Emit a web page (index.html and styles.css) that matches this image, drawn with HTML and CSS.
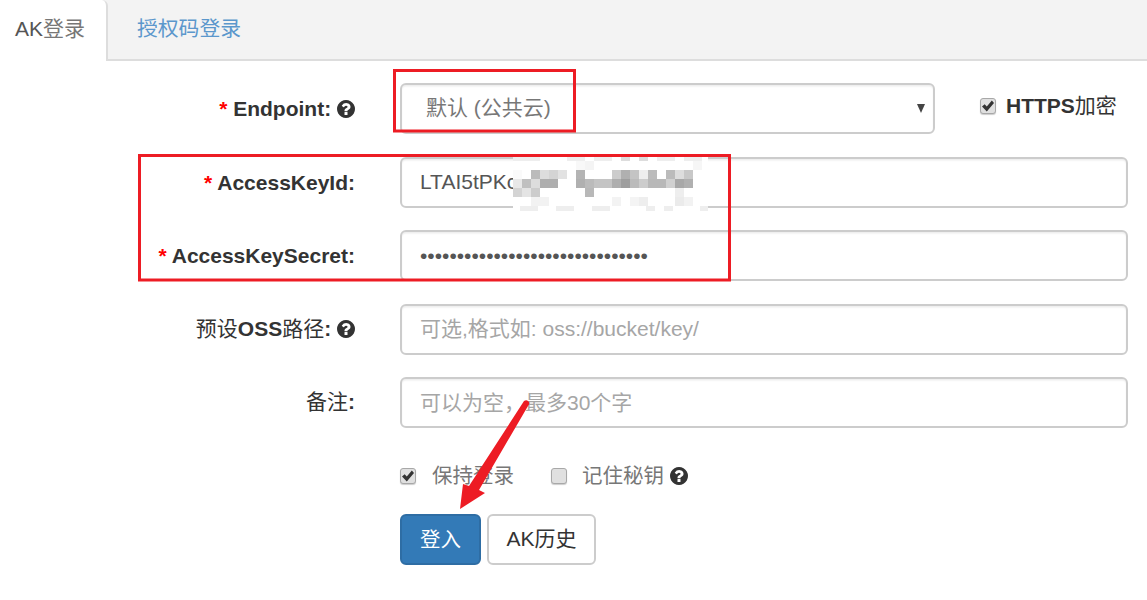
FILE: index.html
```html
<!DOCTYPE html>
<html lang="zh-CN">
<head>
<meta charset="utf-8">
<title>AK登录</title>
<link rel="stylesheet" href="styles.css">
</head>
<body>
<svg width="0" height="0" class="defs">
  <symbol id="q" viewBox="128 128 1536 1536"><path d="M1024 1376v-192q0-14-9-23t-23-9h-192q-14 0-23 9t-9 23v192q0 14 9 23t23 9h192q14 0 23-9t9-23zm256-672q0-88-55.5-163t-138.5-116-170-41q-243 0-371 213-15 24 8 42l132 100q7 6 19 6 16 0 25-12 53-68 86-92 34-24 86-24 48 0 85.5 26t37.5 59q0 38-20 61t-68 45q-63 28-115.5 86.5t-52.5 125.5v36q0 14 9 23t23 9h192q14 0 23-9t9-23q0-19 21.5-49.5t54.5-49.5q32-18 49-28.5t46-35 44.5-48 28-60.5 12.5-81zm384 192q0 209-103 385.5t-279.5 279.5-385.5 103-385.5-103-279.5-279.5-103-385.5 103-385.5 279.5-279.5 385.5-103 385.5 103 279.5 279.5 103 385.5z"/></symbol>
</svg>
<nav class="tabs">
  <a class="tab tab-active">AK<span class="thin">登录</span></a>
  <a class="tab tab-link">授权码登录</a>
</nav>
<form class="form">
  <div class="row">
    <label class="label label-latin"><span class="req">*</span> Endpoint: <svg class="help"><use href="#q"/></svg></label>
    <div class="select-wrap">
      <select class="control select"><option>默认 (公共云)</option></select>
      <span class="caret"></span>
    </div>
    <label class="check https"><input type="checkbox" checked><span>HTTPS<span class="cjk">加密</span></span></label>
  </div>
  <div class="row">
    <label class="label label-latin"><span class="req">*</span> AccessKeyId:</label>
    <input class="control" type="text" value="LTAI5tPKcxxxxxxxxxxxx">
  </div>
  <div class="row">
    <label class="label label-latin"><span class="req">*</span> AccessKeySecret:</label>
    <input class="control" type="password" value="1234567890123456789012345678901">
  </div>
  <div class="row">
    <label class="label"><span class="cjk">预设</span>OSS<span class="cjk">路径</span>: <svg class="help"><use href="#q"/></svg></label>
    <input class="control" type="text" placeholder="可选,格式如: oss://bucket/key/">
  </div>
  <div class="row">
    <label class="label"><span class="cjk">备注</span>:</label>
    <input class="control" type="text" placeholder="可以为空，最多30个字">
  </div>
  <div class="row row-checks">
    <label class="check"><input type="checkbox" checked><span>保持登录</span></label>
    <label class="check check-two"><input type="checkbox"><span>记住秘钥</span><svg class="help"><use href="#q"/></svg></label>
  </div>
  <div class="row row-buttons">
    <button type="button" class="btn btn-primary">登入</button>
    <button type="button" class="btn">AK历史</button>
  </div>
</form>
<svg class="overlay" width="1147" height="600" viewBox="0 0 1147 600">
  <g class="mosaic">
    <rect x="513" y="157" width="195" height="54" fill="#fff"/>
    <g fill="#eee">
      <rect x="513" y="157" width="27" height="4"/><rect x="567" y="157" width="18" height="4"/><rect x="594" y="157" width="18" height="4"/><rect x="621" y="157" width="9" height="4" fill="#ddd"/><rect x="639" y="157" width="9" height="4" fill="#ddd"/><rect x="657" y="157" width="18" height="4"/><rect x="684" y="157" width="18" height="4"/>
      <rect x="576" y="161" width="9" height="9" fill="#f8f8f8"/><rect x="585" y="161" width="9" height="9" fill="#f4f4f4"/><rect x="693" y="161" width="9" height="9" fill="#f6f6f6"/>
    </g>
    <rect x="513" y="170" width="9" height="9" fill="#fafafa"/><rect x="531" y="170" width="9" height="9" fill="#bbb"/><rect x="540" y="170" width="9" height="9" fill="#ddd"/><rect x="549" y="170" width="9" height="9" fill="#d4d4d4"/><rect x="558" y="170" width="9" height="9" fill="#e2e2e2"/><rect x="576" y="170" width="9" height="9" fill="#b4b4b4"/><rect x="612" y="170" width="9" height="9" fill="#ccc"/><rect x="621" y="170" width="9" height="9" fill="#b0b0b0"/><rect x="630" y="170" width="9" height="9" fill="#c4c4c4"/><rect x="639" y="170" width="9" height="9" fill="#eee"/><rect x="648" y="170" width="9" height="9" fill="#bbb"/><rect x="666" y="170" width="9" height="9" fill="#bbb"/><rect x="675" y="170" width="9" height="9" fill="#ddd"/><rect x="684" y="170" width="9" height="9" fill="#c8c8c8"/>
    <rect x="513" y="179" width="9" height="9" fill="#e8e8e8"/><rect x="522" y="179" width="9" height="9" fill="#c0c0c0"/><rect x="531" y="179" width="9" height="9" fill="#ddd"/><rect x="540" y="179" width="18" height="9" fill="#aeaeae"/><rect x="576" y="179" width="9" height="9" fill="#b0b0b0"/><rect x="585" y="179" width="9" height="9" fill="#bbb"/><rect x="594" y="179" width="18" height="9" fill="#c4c4c4"/><rect x="612" y="179" width="9" height="9" fill="#aeaeae"/><rect x="621" y="179" width="9" height="9" fill="#9e9e9e"/><rect x="630" y="179" width="9" height="9" fill="#bbb"/><rect x="639" y="179" width="9" height="9" fill="#ccc"/><rect x="648" y="179" width="18" height="9" fill="#b8b8b8"/><rect x="666" y="179" width="9" height="9" fill="#d0d0d0"/><rect x="675" y="179" width="9" height="9" fill="#a8a8a8"/><rect x="684" y="179" width="9" height="9" fill="#b0b0b0"/>
    <rect x="513" y="188" width="9" height="9" fill="#d4d4d4"/><rect x="522" y="188" width="9" height="9" fill="#e4e4e4"/><rect x="531" y="188" width="9" height="9" fill="#ccc"/><rect x="585" y="188" width="9" height="9" fill="#b8b8b8"/><rect x="675" y="188" width="9" height="9" fill="#eee"/>
    <rect x="531" y="197" width="18" height="9" fill="#f2f2f2"/><rect x="612" y="197" width="9" height="9" fill="#f3f3f3"/><rect x="630" y="197" width="9" height="9" fill="#f4f4f4"/><rect x="639" y="197" width="9" height="9" fill="#eee"/><rect x="675" y="197" width="9" height="9" fill="#ebebeb"/><rect x="684" y="197" width="9" height="9" fill="#f2f2f2"/>
    <rect x="520" y="206" width="18" height="5" fill="#eee"/><rect x="556" y="206" width="18" height="5" fill="#eee"/><rect x="592" y="206" width="18" height="5" fill="#eee"/><rect x="646" y="206" width="9" height="5" fill="#eee"/><rect x="664" y="206" width="9" height="5" fill="#eee"/><rect x="700" y="206" width="8" height="5" fill="#eee"/>
  </g>
  <g fill="none" stroke="#ed1c24" stroke-width="3">
    <rect x="394.5" y="70.5" width="180" height="60.5"/>
    <rect x="139.5" y="155.5" width="590" height="124.5"/>
  </g>
  <path fill="#ed1c24" d="M524 401 Q527 399 529 402 Q530 404 528 406 L479 490 L485 493 L460 509 L463 484 L469 486 Z"/>
</svg>
</body>
</html>
```
FILE: styles.css
```css
* { box-sizing: border-box; }
html, body { margin: 0; padding: 0; background: #fff; }
body {
  width: 1147px;
  height: 600px;
  overflow: hidden;
  position: relative;
  font: 21px/1.43 "Liberation Sans", "Noto Sans CJK SC", sans-serif;
  color: #333;
}
.defs { position: absolute; }
.tabs {
  display: flex;
  height: 61px;
  background: #f3f3f3;
  border-bottom: 2px solid #ddd;
}
.tab { display: block; height: 61px; line-height: 58px; }
.tab-active {
  width: 108px;
  padding-left: 15px;
  color: #555;
  background: #fff;
  border-right: 2px solid #ddd;
  border-top-right-radius: 6px;
}
.thin { color: #777; }
.tab-link { padding-left: 29px; color: #5b97cc; font-size: 20.8px; }
.form { padding: 22px 19px 0 0; }
.row { display: flex; height: 51px; margin-bottom: 22.5px; align-items: center; }
.label {
  flex: none;
  width: 355px;
  margin-right: 45px;
  text-align: right;
  font-weight: 700;
}
.label-latin { padding-top: 2px; }
.cjk { font-weight: 400; }
.req { color: #f00; font-weight: 700; }
.help { width: 18px; height: 18px; fill: #333; vertical-align: -2px; }
.control {
  flex: 1;
  min-width: 0;
  height: 51px;
  padding: 0 18px;
  font: inherit;
  color: #555;
  background: #fff;
  border: 2px solid #ccc;
  border-radius: 6px;
  box-shadow: inset 0 1.5px 1.5px rgba(0, 0, 0, .075);
  outline: none;
}
.control::placeholder { color: #a6a6a6; opacity: 1; }
.select-wrap { position: relative; width: 535px; height: 51px; margin-right: 45px; flex: none; }
.select { width: 100%; display: block; appearance: none; padding-left: 24px; color: #777; }
.caret {
  position: absolute;
  right: 10px;
  top: 21px;
  border-left: 4.5px solid transparent;
  border-right: 4.5px solid transparent;
  border-top: 9px solid #444;
}
.check { display: flex; align-items: center; color: #777; font-size: 20.5px; }
.check input {
  appearance: none;
  position: relative;
  width: 16px;
  height: 16px;
  margin: 0 16px 0 0;
  flex: none;
  background: #e0e0e0;
  border: 1.5px solid #a8a8a8;
  border-radius: 3px;
  box-shadow: 0 1px 1px rgba(0, 0, 0, .2);
}
.check input:checked::after {
  content: "";
  position: absolute;
  inset: 1px;
  background: #333;
  clip-path: polygon(0 55%, 22% 35%, 40% 55%, 82% 5%, 100% 25%, 40% 95%);
}
.check-two input { margin-right: 15px; }
.check .help { margin-left: 6px; }
.https { padding-bottom: 5px; color: #333; font-weight: 700; font-size: 21px; }
.https input { margin-right: 10px; }
.row-checks { padding-left: 400px; gap: 37px; margin-bottom: 12.5px; }
.row-buttons { padding-left: 400px; gap: 6px; }
.btn {
  height: 51px;
  padding: 0 17.5px;
  font: inherit;
  color: #333;
  background: #fff;
  border: 2px solid #ccc;
  border-radius: 6px;
}
.btn-primary { width: 81px; padding: 0; color: #fff; background: #337ab7; border-color: #2e6da4; font-size: 20.5px; }
.overlay { position: absolute; left: 0; top: 0; pointer-events: none; }
```
